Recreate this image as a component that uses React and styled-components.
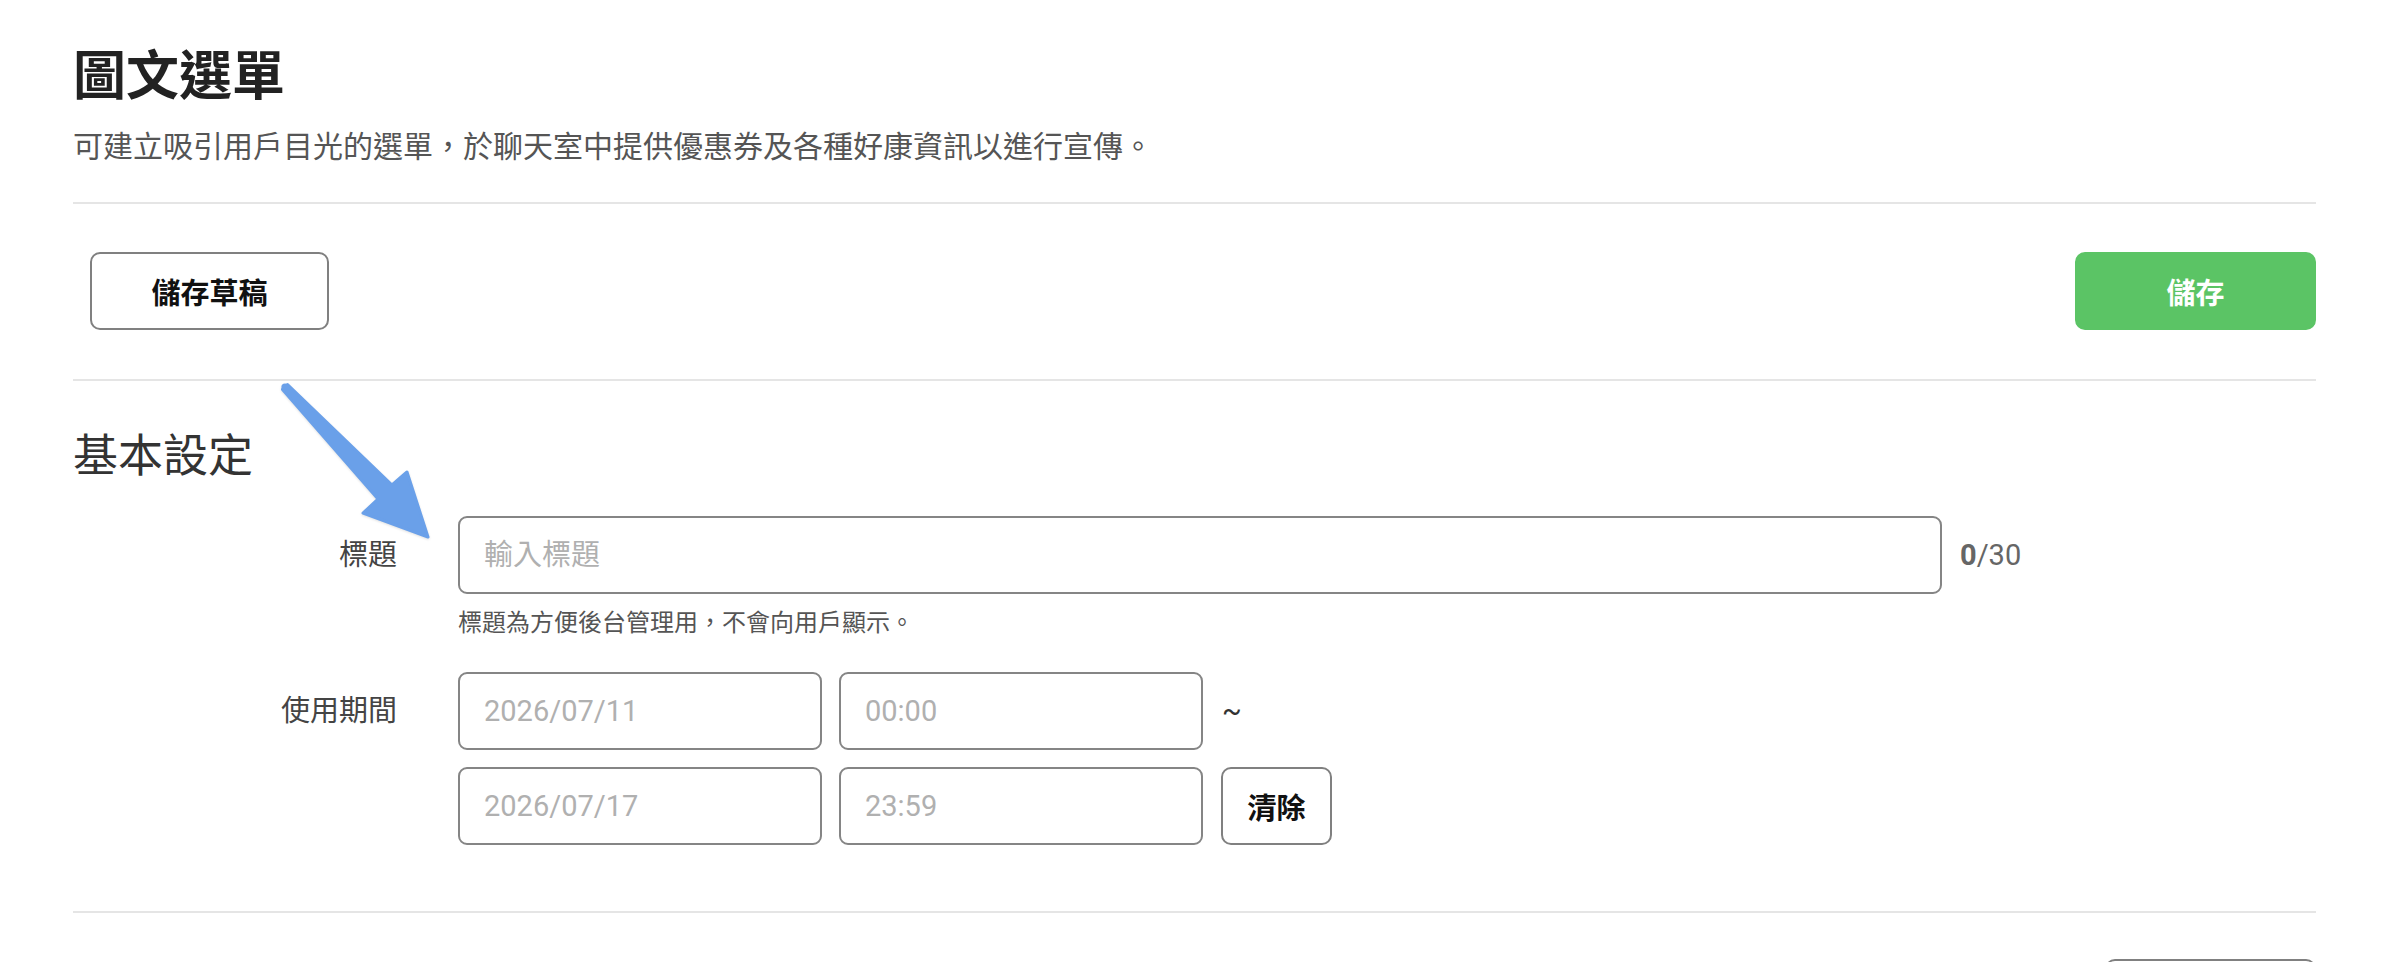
import React from 'react'
import styled, { createGlobalStyle } from 'styled-components'

const GlobalStyle = createGlobalStyle`
  body {
    margin: 0;
    background: #fff;
    font-family: Roboto, "Noto Sans CJK TC", "Noto Sans", sans-serif;
    color: #333;
  }
  * { box-sizing: border-box; }
`

const Page = styled.div`
  position: relative;
  padding: 0 80px 0 73px;
`

const Header = styled.header`
  padding: 46px 0 35px;
  border-bottom: 2px solid #e5e5e5;
`

const Title = styled.h1`
  margin: 0;
  font-size: 53px;
  line-height: 62px;
  font-weight: 700;
  color: #222;
`

const Subtitle = styled.p`
  margin: 19px 0 0;
  font-size: 30px;
  line-height: 40px;
  color: #555;
`

const Toolbar = styled.div`
  display: flex;
  justify-content: space-between;
  align-items: center;
  padding: 48px 0 49px 17px;
  border-bottom: 2px solid #e5e5e5;
`

const Button = styled.button`
  height: 78px;
  padding: 0;
  width: ${p => p.$width}px;
  border-radius: 10px;
  border: 2px solid ${p => (p.$primary ? '#5bc465' : '#808080')};
  background: ${p => (p.$primary ? '#5bc465' : '#fff')};
  color: ${p => (p.$primary ? '#fff' : '#111')};
  font-family: inherit;
  font-size: 29px;
  font-weight: 700;
  cursor: pointer;
`

const Section = styled.section`
  padding: 46px 0 ${p => p.$bottom}px;
  border-bottom: ${p => (p.$last ? 'none' : '2px solid #e5e5e5')};
`

const SectionTitle = styled.h2`
  margin: 0 0 29px;
  font-size: 45px;
  line-height: 60px;
  font-weight: 400;
  color: #333;
`

const FormRow = styled.div`
  display: grid;
  grid-template-columns: 324px 1fr;
  column-gap: 61px;
  align-items: start;
  margin-top: ${p => p.$top || 0}px;
`

const Label = styled.label`
  text-align: right;
  font-size: 29px;
  line-height: 78px;
  color: #444;
`

const Field = styled.div`
  display: flex;
  flex-direction: column;
  gap: 17px;
`

const Line = styled.div`
  display: flex;
  align-items: center;
  gap: ${p => p.$gap || 17}px;
`

const Input = styled.input`
  width: ${p => p.$width}px;
  height: 78px;
  padding: 0 24px;
  border: 2px solid #858585;
  border-radius: 9px;
  font-family: inherit;
  font-size: 29px;
  color: #333;
  outline: none;
  &::placeholder {
    color: #b0b0b0;
  }
`

const Counter = styled.span`
  font-size: 29px;
  color: #666;
  b { font-weight: 700; }
`

const Hint = styled.p`
  margin: 13px 0 0;
  font-size: 24px;
  line-height: 32px;
  color: #555;
`

const Tilde = styled.span`
  margin-left: 2px;
  font-size: 29px;
  color: #333;
`

const SmallButton = styled(Button)`
  width: 111px;
  margin-left: 1px;
`

const NextRow = styled.div`
  display: flex;
  justify-content: flex-end;
`

const ArrowMark = styled.svg`
  position: absolute;
  left: 270px;
  top: 375px;
  width: 170px;
  height: 175px;
  pointer-events: none;
  filter: drop-shadow(0 1px 1px rgba(0, 0, 0, 0.12));
`

function Arrow() {
  return (
    <ArrowMark viewBox="0 0 170 175">
      <polygon
        points="17.5,9.6 122,110 137,97 158,162 93,138 108,124 12.5,14.4"
        fill="#6aa0e9"
        stroke="#6aa0e9"
        strokeWidth="3"
        strokeLinejoin="round"
      />
      <circle cx="15" cy="12" r="3.6" fill="#6aa0e9" />
    </ArrowMark>
  )
}

export default function App() {
  return (
    <Page>
      <GlobalStyle />
      <Header>
        <Title>圖文選單</Title>
        <Subtitle>可建立吸引用戶目光的選單，於聊天室中提供優惠券及各種好康資訊以進行宣傳。</Subtitle>
      </Header>

      <Toolbar>
        <Button $width={239}>儲存草稿</Button>
        <Button $primary $width={241}>儲存</Button>
      </Toolbar>

      <Section $bottom={66}>
        <SectionTitle>基本設定</SectionTitle>

        <FormRow>
          <Label>標題</Label>
          <div>
            <Line $gap={18}>
              <Input $width={1484} placeholder="輸入標題" />
              <Counter><b>0</b>/30</Counter>
            </Line>
            <Hint>標題為方便後台管理用，不會向用戶顯示。</Hint>
          </div>
        </FormRow>

        <FormRow $top={33}>
          <Label>使用期間</Label>
          <Field>
            <Line>
              <Input $width={364} placeholder="2026/07/11" />
              <Input $width={364} placeholder="00:00" />
              <Tilde>~</Tilde>
            </Line>
            <Line>
              <Input $width={364} placeholder="2026/07/17" />
              <Input $width={364} placeholder="23:59" />
              <SmallButton>清除</SmallButton>
            </Line>
          </Field>
        </FormRow>
      </Section>

      <Section $last $bottom={40}>
        <NextRow>
          <Button $width={211} aria-label="more" />
        </NextRow>
      </Section>

      <Arrow />
    </Page>
  )
}
